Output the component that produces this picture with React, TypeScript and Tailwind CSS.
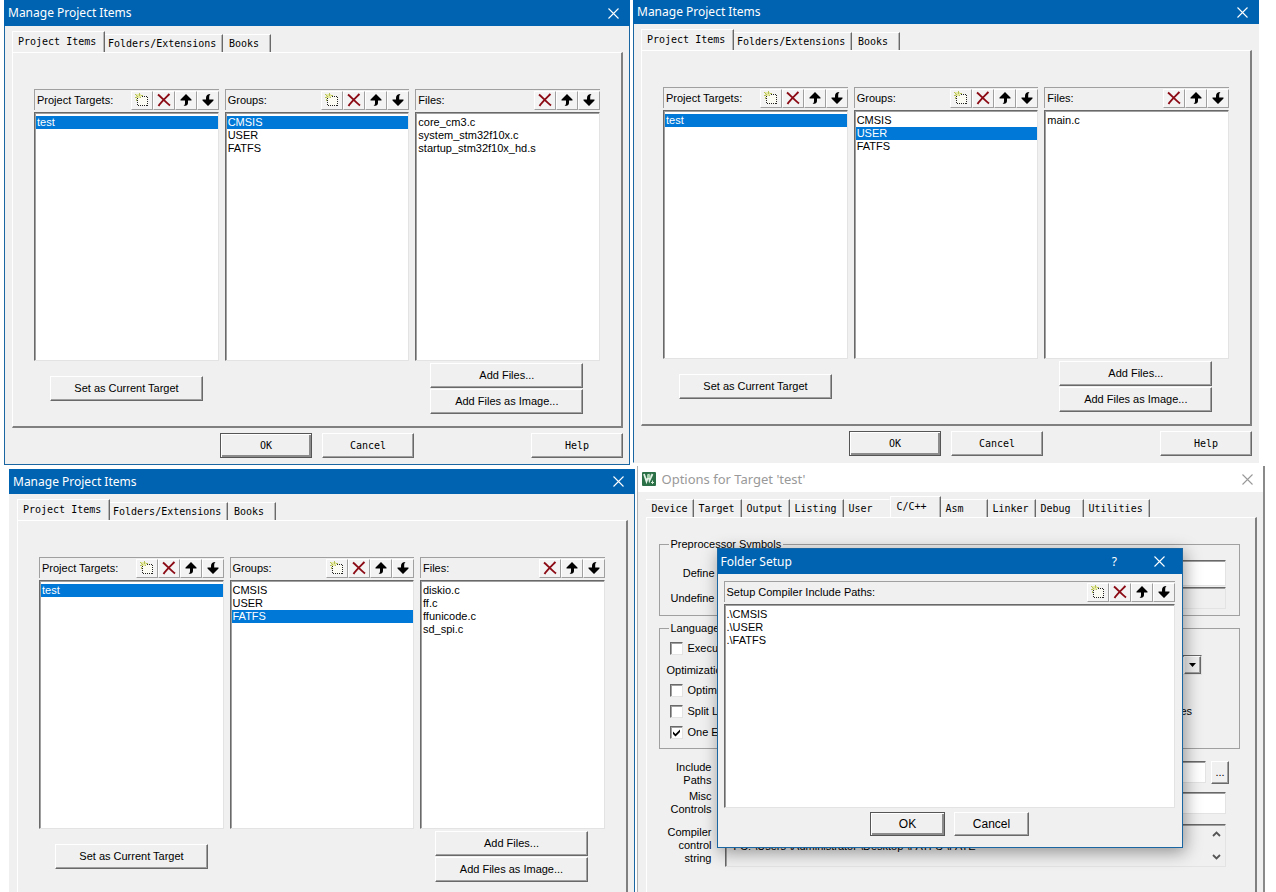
import React, { useState } from 'react';

type Tool = 'new' | 'delete' | 'up' | 'down';

const ALL_TOOLS: Tool[] = ['new', 'delete', 'up', 'down'];
const FILE_TOOLS: Tool[] = ['delete', 'up', 'down'];

const FILES_BY_GROUP: Record<string, string[]> = {
  CMSIS: ['core_cm3.c', 'system_stm32f10x.c', 'startup_stm32f10x_hd.s'],
  USER: ['main.c'],
  FATFS: ['diskio.c', 'ff.c', 'ffunicode.c', 'sd_spi.c'],
};

const PROJECT_TABS = [
  { label: 'Project Items', className: 'w-[93px] pl-[5px]' },
  { label: 'Folders/Extensions', className: 'w-[118px] pl-[3px]' },
  { label: 'Books', className: 'w-[48px] pl-[6px]' },
];

const OPTION_TABS = [
  { label: 'Device', className: 'w-[48px] pl-[6px]' },
  { label: 'Target', className: 'w-[48px] pl-[5px]' },
  { label: 'Output', className: 'w-[48px] pl-[5px]' },
  { label: 'Listing', className: 'w-[54px] pl-[5px]' },
  { label: 'User', className: 'w-[46px] pl-[5px] border-r-transparent shadow-none' },
  { label: 'C/C++', className: 'w-[51px] pl-[6px]' },
  { label: 'Asm', className: 'w-[47px] pl-[5px]' },
  { label: 'Linker', className: 'w-[48px] pl-[5px]' },
  { label: 'Debug', className: 'w-[48px] pl-[5px]' },
  { label: 'Utilities', className: 'w-[66px] pl-[5px]' },
];

const MONO = "font-['DejaVu_Sans_Mono',monospace] text-[10px] leading-[13px]";
const TITLE = "font-['Noto_Sans',sans-serif] text-[12px] leading-[16px]";
const RAISED =
  'border border-t-white border-l-white border-r-[#696969] border-b-[#696969] shadow-[inset_-1px_-1px_0_#a0a0a0] bg-[#f0f0f0]';
const SUNKEN =
  'border border-t-[#696969] border-l-[#696969] border-r-[#e3e3e3] border-b-[#e3e3e3] shadow-[inset_1px_1px_0_#a0a0a0]';

function ToolIcon({ tool }: { tool: Tool }) {
  if (tool === 'new') {
    return (
      <svg width="14" height="14" viewBox="0 0 14 14" shapeRendering="crispEdges">
        <rect x="2.5" y="3.5" width="10" height="9" fill="#fbfbf4" stroke="#222" strokeDasharray="1 1" />
        <path d="M1 1h5v4H1z" fill="#e6eaa4" />
        <path d="M0 1h1v1H0zM1 2h1v1H1zM4 0h1v3H4zM0 4h2v1H0zM6 2h2v1H6zM2 3h1v1H2zM1 6h1v2H1zM5 4h1v1H5z" fill="#b5bf5a" />
      </svg>
    );
  }
  if (tool === 'delete') {
    return (
      <svg width="14" height="14" viewBox="0 0 14 14">
        <path d="M1 1.5C4 4 9 9.500 13 12.500M12.500 1C9 4.500 4 9 1.500 13" stroke="#8b0a14" strokeWidth="1.900" fill="none" />
      </svg>
    );
  }
  return (
    <svg width="12" height="12" viewBox="0 0 12 12">
      {tool === 'up' ? (
        <path d="M6 0L11.500 5.500V6.500H8V9C8 11 6.500 12 3.500 12C4.500 11.300 5 10.500 5 9V6.500H.5V5.500Z" fill="#000" />
      ) : (
        <path d="M6 12L.5 6.500V5.500H4V4C4 1.500 5.500 0 8.500 0C7.500 1 7.200 2 7.200 3.500V5.500H11.500V6.500Z" fill="#000" />
      )}
    </svg>
  );
}

function Cross() {
  return (
    <svg width="11" height="11" viewBox="0 0 11 11">
      <path d="M.5.5l10 10M10.500.5l-10 10" stroke="currentColor" strokeWidth="1.100" />
    </svg>
  );
}

function PushButton({ label, className, primary }: { label: string; className: string; primary?: boolean }) {
  const frame = primary
    ? 'border border-[#555] shadow-[inset_1px_1px_0_#fff,inset_-2px_-2px_0_#8c8c8c] bg-[#f0f0f0]'
    : RAISED;
  return <button className={`${frame} ${className} shrink-0 text-center`}>{label}</button>;
}

function ListHeader({ label, tools }: { label: string; tools: Tool[] }) {
  return (
    <div className="flex h-[21px] items-center justify-between border-t border-l border-[#a0a0a0] pl-[2px]">
      <span className="whitespace-nowrap">{label}</span>
      <div className="flex">
        {tools.map((tool) => (
          <button
            key={tool}
            aria-label={tool}
            className="flex h-[19px] w-[22px] items-center justify-center border border-t-white border-l-white border-r-[#a0a0a0] border-b-[#a0a0a0] bg-[#f3f3f3]"
          >
            <ToolIcon tool={tool} />
          </button>
        ))}
      </div>
    </div>
  );
}

interface ListPanelProps {
  label: string;
  tools: Tool[];
  items: string[];
  selected?: string;
  onSelect?: (item: string) => void;
  height?: string;
}

function ListPanel({ label, tools, items, selected, onSelect, height = 'h-[249px]' }: ListPanelProps) {
  return (
    <div className="min-w-0">
      <ListHeader label={label} tools={tools} />
      <ul role="listbox" aria-label={label} className={`${SUNKEN} ${height} mt-[2px] bg-white pt-[3px] pl-px`}>
        {items.map((item) => (
          <li
            key={item}
            role="option"
            aria-selected={item === selected}
            onClick={() => onSelect?.(item)}
            className={`h-[13px] pl-px leading-[13px] ${item === selected ? 'bg-[#0078d7] text-white' : ''}`}
          >
            {item}
          </li>
        ))}
      </ul>
    </div>
  );
}

function TabStrip({ tabs, active }: { tabs: { label: string; className: string }[]; active: string }) {
  return (
    <div role="tablist" className={`${MONO} flex h-[21px] items-end`}>
      {tabs.map((tab) => {
        const isActive = tab.label === active;
        return (
          <button
            key={tab.label}
            role="tab"
            aria-selected={isActive}
            className={`shrink-0 border-t border-r border-t-white border-r-[#696969] text-left whitespace-nowrap shadow-[inset_-1px_0_0_#b8b8b8] ${
              isActive ? 'h-[21px] border-l border-l-white pb-px' : 'h-[18px]'
            } ${tab.className}`}
          >
            {tab.label}
          </button>
        );
      })}
    </div>
  );
}

interface ManageProps {
  group: string;
  frame: string;
  titleHeight: string;
  footer?: boolean;
}

function ManageProjectItems({ group, frame, titleHeight, footer = true }: ManageProps) {
  const [selected, setSelected] = useState(group);

  return (
    <section className={`min-w-0 flex-1 border-r border-b border-l bg-[#f0f0f0] ${frame}`}>
      <header className={`${TITLE} ${titleHeight} -mx-px flex items-center justify-between bg-[#0063b1] pr-[11px] pl-[4px] text-white`}>
        <h2>Manage Project Items</h2>
        <button aria-label="Close">
          <Cross />
        </button>
      </header>

      <div className="pt-[5px] pr-[6px] pb-[6px] pl-[7px]">
        <TabStrip tabs={PROJECT_TABS} active="Project Items" />

        <div className="border-t border-r-2 border-b-2 border-l border-t-white border-r-[#808080] border-b-[#808080] border-l-white pt-[36px] pr-[21px] pb-[12px] pl-[21px]">
          <div className="grid grid-cols-3 gap-x-[6px]">
            <ListPanel label="Project Targets:" tools={ALL_TOOLS} items={['test']} selected="test" />
            <ListPanel
              label="Groups:"
              tools={ALL_TOOLS}
              items={['CMSIS', 'USER', 'FATFS']}
              selected={selected}
              onSelect={setSelected}
            />
            <ListPanel label="Files:" tools={FILE_TOOLS} items={FILES_BY_GROUP[selected]} />

            <div className="pt-[15px] pl-4">
              <PushButton label="Set as Current Target" className="h-[25px] w-[153px]" />
            </div>
            <div className="col-start-3 flex flex-col gap-px pt-[2px] pl-[15px]">
              <PushButton label="Add Files..." className="h-[25px] w-[153px]" />
              <PushButton label="Add Files as Image..." className="h-[25px] w-[153px]" />
            </div>
          </div>
        </div>

        {footer && (
          <div className={`${MONO} flex justify-end pt-[5px]`}>
            <PushButton primary label="OK" className="mr-[10px] h-[25px] w-[92px]" />
            <PushButton label="Cancel" className="mr-[117px] h-[25px] w-[92px]" />
            <PushButton label="Help" className="h-[25px] w-[92px]" />
          </div>
        )}
      </div>
    </section>
  );
}

function CheckBox({ label, checked, className = '' }: { label: string; checked?: boolean; className?: string }) {
  return (
    <label className={`flex items-center gap-[5px] ${className}`}>
      <span className="grid">
        <input
          type="checkbox"
          defaultChecked={checked}
          className={`${SUNKEN} peer col-start-1 row-start-1 size-[13px] appearance-none bg-white`}
        />
        <svg
          width="13"
          height="13"
          viewBox="0 0 13 13"
          className="pointer-events-none invisible col-start-1 row-start-1 peer-checked:visible"
        >
          <path d="M3 5.500L5.500 8L10 3.500V6L5.500 10.500L3 8Z" fill="#000" />
        </svg>
      </span>
      <span className="whitespace-nowrap">{label}</span>
    </label>
  );
}

function FolderSetup() {
  return (
    <section
      role="dialog"
      aria-label="Folder Setup"
      className="absolute top-[82px] right-[80px] left-[79px] border border-[#1a66a3] bg-[#f0f0f0] shadow-[2px_4px_16px_rgba(0,0,0,0.4)]"
    >
      <header className={`${TITLE} flex h-[25px] items-center bg-[#0063b1] pr-[17px] pl-[3px] text-white`}>
        <h2 className="flex-1">Folder Setup</h2>
        <button aria-label="Help" className="mr-[37px]">
          ?
        </button>
        <button aria-label="Close">
          <Cross />
        </button>
      </header>
      <div className="pt-[7px] pr-[7px] pb-[11px] pl-[6px]">
        <ListPanel
          label="Setup Compiler Include Paths:"
          tools={ALL_TOOLS}
          items={['.\\CMSIS', '.\\USER', '.\\FATFS']}
          height="h-[204px]"
        />
        <div className="mt-1 flex justify-end gap-[9px] pr-[146px] text-[12px]">
          <PushButton primary label="OK" className="h-[24px] w-[75px]" />
          <PushButton label="Cancel" className="h-[24px] w-[75px]" />
        </div>
      </div>
    </section>
  );
}

function OptionsForTarget() {
  return (
    <section className="relative min-w-0 flex-1 border-r-2 border-l border-r-[#8a8a8a] border-l-[#b0b0b0] bg-[#f0f0f0]">
      <header className={`${TITLE} flex h-[26px] items-center bg-white pr-[10px] pl-1 text-[#999]`}>
        <svg width="14" height="14" viewBox="0 0 14 14" className="mr-[6px]">
          <rect width="14" height="14" rx="1" fill="#2c7048" />
          <path d="M2 2L4.500 9.500L6.500 4M6.500 2L7.500 8.500L10.500 2" stroke="#e4f2e6" strokeWidth="1.800" fill="none" />
          <path d="M5 2.500H8.500V6H5Z" fill="#a9d2ae" />
          <path d="M10.500 8.500V12M9 10.500H12" stroke="#d5e9d8" />
        </svg>
        <h2 className="flex-1 text-[13px]">Options for Target 'test'</h2>
        <button aria-label="Close">
          <Cross />
        </button>
      </header>

      <div className="pt-1 pr-[6px] pl-[8px]">
        <TabStrip tabs={OPTION_TABS} active="C/C++" />

        <div className="min-h-[400px] border-t border-r-2 border-l border-t-white border-r-[#808080] border-l-white pt-[20px]">
          <fieldset className="mr-[15px] ml-[12px] border border-[#a0a0a0] pr-[13px] pb-[6px]">
            <legend className="ml-[9px] px-[2px] leading-[13px]">Preprocessor Symbols</legend>
            <div className="flex items-center gap-[5px] pt-[9px]">
              <label htmlFor="define" className="w-[55px] text-right">Define</label>
              <input id="define" className={`${SUNKEN} h-[26px] min-w-0 flex-1 bg-white`} />
            </div>
            <div className="flex items-center gap-[5px] pt-px">
              <label htmlFor="undefine" className="w-[55px] text-right">Undefine</label>
              <input id="undefine" className={`${SUNKEN} h-[22px] min-w-0 flex-1 bg-[#f0f0f0]`} />
            </div>
          </fieldset>

          <fieldset className="mt-[6px] mr-[15px] ml-[12px] border border-[#a0a0a0] pt-[3px] pb-[5px]">
            <legend className="ml-[9px] px-[2px] leading-[13px]">Language</legend>
            <CheckBox label="Execute" className="h-[21px] pl-[10px]" />
            <div className="flex h-[21px] items-start gap-2 pr-[37px] pl-[7px]">
              <label htmlFor="optimization" className="pt-[5px]">Optimization:</label>
              <div className={`${SUNKEN} -mt-1 flex h-[20px] flex-1 items-center bg-white`}>
                <select id="optimization" className="h-[16px] min-w-0 flex-1 appearance-none bg-white">
                  <option>Level 0 (-O0)</option>
                </select>
                <span className={`${RAISED} pointer-events-none flex h-[18px] w-[17px] items-center justify-center`}>
                  <svg width="7" height="4" viewBox="0 0 7 4">
                    <path d="M0 0H7L3.500 4Z" fill="#000" />
                  </svg>
                </span>
              </div>
            </div>
            <CheckBox label="Optimize for Time" className="h-[21px] pl-[10px]" />
            <div className="flex h-[21px] items-center justify-between pr-[47px] pl-[10px]">
              <CheckBox label="Split Load and Store Multiple" />
              <CheckBox label="No Auto Includes" />
            </div>
            <CheckBox checked label="One ELF Section per Function" className="h-[21px] pl-[10px]" />
          </fieldset>

          <div className="flex flex-col pt-[12px] pr-[26px] leading-[13px]">
            <div className="flex items-start">
              <label htmlFor="include" className="mr-[13px] w-[65px] text-right">
                Include
                <br />
                Paths
              </label>
              <input id="include" className={`${SUNKEN} mr-[5px] h-[22px] min-w-0 flex-1 bg-white`} />
              <PushButton label="..." className="h-[23px] w-[18px]" />
            </div>
            <div className="mt-[3px] flex items-center pr-[3px]">
              <label htmlFor="misc" className="mr-[13px] w-[65px] text-right">
                Misc
                <br />
                Controls
              </label>
              <input id="misc" className={`${SUNKEN} h-[22px] min-w-0 flex-1 bg-white`} />
            </div>
            <div className="mt-[8px] flex items-center pr-[3px]">
              <label htmlFor="compiler" className="mr-[13px] w-[65px] text-right">
                Compiler
                <br />
                control
                <br />
                string
              </label>
              <div className={`${SUNKEN} flex h-[43px] min-w-0 flex-1`}>
                <textarea
                  id="compiler"
                  readOnly
                  className="min-w-0 flex-1 resize-none overflow-hidden pt-[2px] pl-[4px] leading-[13px]"
                  value={'-c --cpu Cortex-M3 -g -O0 --apcs=interwork\n-I"C: \\Users \\Administrator \\Desktop \\FATFS \\FATE'}
                />
                <div className="flex w-[17px] flex-col items-center justify-between py-[6px]">
                  <svg width="9" height="6" viewBox="0 0 9 6">
                    <path d="M1 5L4.500 1.500L8 5" stroke="#555" strokeWidth="1.800" fill="none" />
                  </svg>
                  <svg width="9" height="6" viewBox="0 0 9 6">
                    <path d="M1 1L4.500 4.500L8 1" stroke="#555" strokeWidth="1.800" fill="none" />
                  </svg>
                </div>
              </div>
            </div>
          </div>
        </div>
      </div>

      <FolderSetup />
    </section>
  );
}

export default function App() {
  return (
    <main className="h-screen overflow-hidden bg-white font-['Liberation_Sans',Arial,sans-serif] text-[11px] leading-[13px] text-black">
      <div className="flex items-start gap-[3px] pr-[17px] pl-1">
        <ManageProjectItems group="CMSIS" frame="border-[#1a66a3]" titleHeight="h-[26px]" />
        <ManageProjectItems group="USER" frame="border-[#f0f0f0] border-l-[#1a66a3]" titleHeight="h-6" />
      </div>
      <div className="flex items-start gap-[2px] pt-px pr-[11px] pl-[9px]">
        <div className="flex min-w-0 flex-1 pt-[3px]">
          <ManageProjectItems
            group="FATFS"
            frame="border-[#f0f0f0] border-r-[#1a66a3]"
            titleHeight="h-[25px]"
            footer={false}
          />
        </div>
        <OptionsForTarget />
      </div>
    </main>
  );
}
